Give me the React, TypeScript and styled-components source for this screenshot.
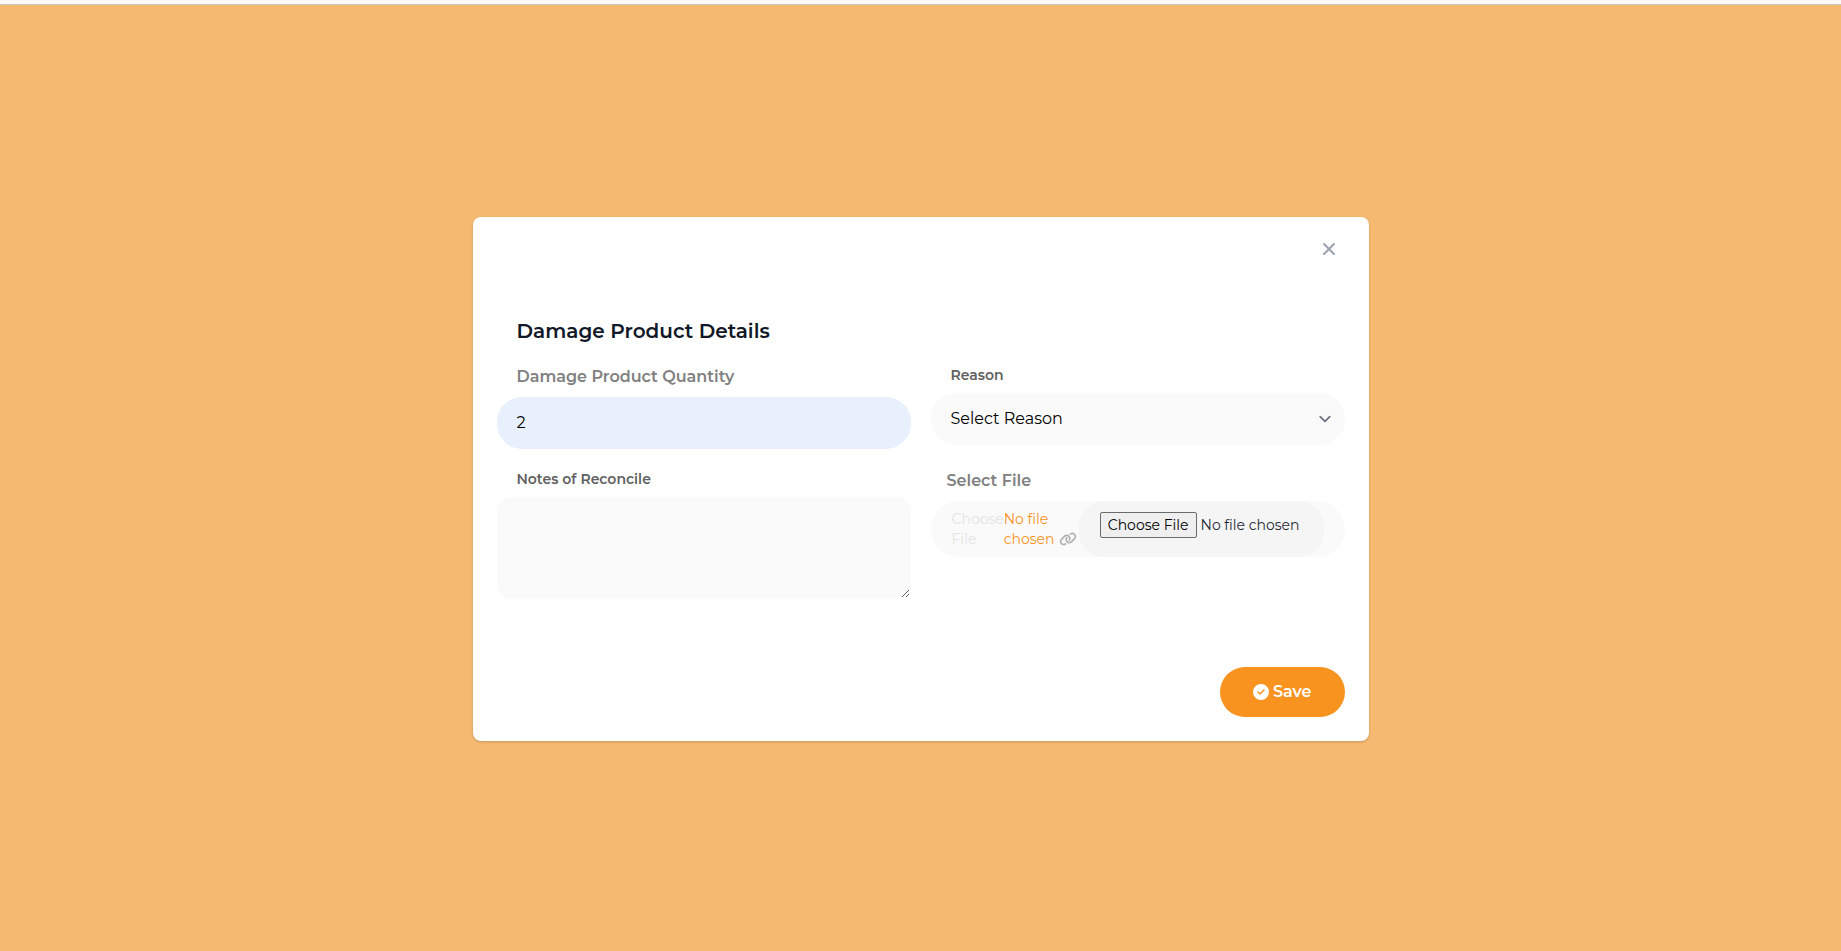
import React from "react";
import styled, { createGlobalStyle } from "styled-components";
import { FaCircleCheck, FaLink } from "react-icons/fa6";

const GlobalStyle = createGlobalStyle`
  *, *::before, *::after { box-sizing: border-box; }
  body {
    margin: 0;
    font-family: Montserrat, Inter, "Liberation Sans", sans-serif;
    font-size: 16px;
    line-height: 24px;
    color: #111827;
  }
  button, input, select, textarea { font: inherit; color: inherit; margin: 0; }
`;

const Page = styled.div`
  display: flex;
  flex-direction: column;
  min-height: 100vh;
`;

const TopBar = styled.header`
  height: 5px;
  background: #fafafa;
  border-bottom: 1px solid #c8c8c8;
`;

const Backdrop = styled.main`
  flex: 1;
  display: flex;
  align-items: center;
  justify-content: center;
  padding-top: 2px;
  background: #f5b971;
`;

const Dialog = styled.section`
  width: 100%;
  max-width: 896px;
  padding: 16px 24px 24px;
  border-radius: 8px;
  background: #fff;
  box-shadow: 0 1px 3px rgba(0, 0, 0, 0.1), 0 1px 2px rgba(0, 0, 0, 0.1);
`;

const DialogHeader = styled.div`
  display: flex;
  justify-content: flex-end;
  margin-bottom: 52px;
`;

const CloseButton = styled.button`
  display: flex;
  padding: 6px;
  border: 0;
  border-radius: 8px;
  background: transparent;
  color: #9ca3af;
  cursor: pointer;
`;

const Title = styled.h1`
  margin: 0 20px 20px;
  font-size: 20px;
  line-height: 28px;
  font-weight: 600;
`;

const Fields = styled.div`
  display: grid;
  grid-template-columns: repeat(2, minmax(0, 1fr));
  gap: 20px;
  align-items: start;
`;

const Field = styled.div`
  display: flex;
  flex-direction: column;
  gap: 8px;
`;

const Label = styled.label<{ $large?: boolean; $inset?: number }>`
  padding-left: ${(p) => p.$inset ?? 20}px;
  font-size: ${(p) => (p.$large ? 16 : 14)}px;
  line-height: ${(p) => (p.$large ? 24 : 20)}px;
  font-weight: 600;
  color: ${(p) => (p.$large ? "#808080" : "#5f5f5f")};
`;

const QuantityInput = styled.input`
  width: 100%;
  height: 52px;
  padding: 0 20px 2px;
  border: 0;
  border-radius: 25px;
  background: #e8f0fe;
  color: #000;
`;

const SelectWrap = styled.div`
  position: relative;
`;

const ReasonSelect = styled.select`
  display: block;
  appearance: none;
  width: 100%;
  height: 52px;
  padding: 0 40px 0 20px;
  border: 0;
  border-radius: 25px;
  background: #fafafa;
  color: #000;
`;

const Chevron = styled.svg`
  position: absolute;
  top: 14px;
  right: 8px;
  width: 24px;
  height: 24px;
  color: #6b7280;
  pointer-events: none;
`;

const Notes = styled.textarea`
  width: 100%;
  height: 102px;
  padding: 12px 20px;
  border: 1px solid #fafafa;
  border-radius: 15px;
  background: #fafafa;
  resize: vertical;
`;

const FileField = styled.div`
  display: flex;
  height: 56px;
  padding: 0 21px;
  border-radius: 28px;
  background: #fafafa;
  font-size: 14px;
  line-height: 20px;
`;

const FilePrompt = styled.span`
  flex: 0 0 52px;
  padding-top: 8px;
  color: #e3e3e3;
`;

const FileStatus = styled.span`
  flex: 0 0 75px;
  padding-top: 8px;
  color: #f7931e;

  svg {
    width: 18px;
    height: 14px;
    margin-left: 4px;
    vertical-align: -2px;
    color: #b3b3b3;
  }
`;

const FileInput = styled.input`
  flex: 1;
  min-width: 0;
  height: 56px;
  padding: 11px 21px;
  border-radius: 25px;
  background: #f5f5f5;
  color: #1f2937;

  &::file-selector-button {
    height: 26px;
    margin: 0 4px 0 0;
    padding: 1px 7px;
    border: 1px solid #6b6b6b;
    border-radius: 2px;
    background: #efefef;
    color: #000;
    font: inherit;
  }
`;

const Actions = styled.div`
  display: flex;
  justify-content: flex-end;
  margin-top: 68px;
`;

const SaveButton = styled.button`
  display: flex;
  align-items: center;
  gap: 4px;
  height: 50px;
  padding: 0 33px;
  border: 0;
  border-radius: 25px;
  background: #f7931e;
  color: #fff;
  font-weight: 600;
  cursor: pointer;
`;

export default function App() {
  return (
    <Page>
      <GlobalStyle />
      <TopBar />
      <Backdrop>
        <Dialog role="dialog" aria-labelledby="dialog-title">
          <DialogHeader>
            <CloseButton type="button" aria-label="Close">
              <svg width="20" height="20" viewBox="0 0 20 20" fill="currentColor">
                <path
                  fillRule="evenodd"
                  clipRule="evenodd"
                  d="M4.293 4.293a1 1 0 011.414 0L10 8.586l4.293-4.293a1 1 0 111.414 1.414L11.414 10l4.293 4.293a1 1 0 01-1.414 1.414L10 11.414l-4.293 4.293a1 1 0 01-1.414-1.414L8.586 10 4.293 5.707a1 1 0 010-1.414z"
                />
              </svg>
            </CloseButton>
          </DialogHeader>
          <form onSubmit={(e) => e.preventDefault()}>
            <Title id="dialog-title">Damage Product Details</Title>
            <Fields>
              <Field>
                <Label $large htmlFor="quantity">Damage Product Quantity</Label>
                <QuantityInput id="quantity" type="text" inputMode="numeric" defaultValue="2" />
              </Field>
              <Field>
                <Label htmlFor="reason">Reason</Label>
                <SelectWrap>
                  <ReasonSelect id="reason" defaultValue="">
                    <option value="">Select Reason</option>
                  </ReasonSelect>
                  <Chevron viewBox="0 0 20 20" fill="none" aria-hidden="true">
                    <path d="M6 8l4 4 4-4" stroke="currentColor" strokeWidth="1.5" strokeLinecap="round" strokeLinejoin="round" />
                  </Chevron>
                </SelectWrap>
              </Field>
              <Field>
                <Label htmlFor="notes">Notes of Reconcile</Label>
                <Notes id="notes" />
              </Field>
              <Field>
                <Label $large $inset={16} htmlFor="file">Select File</Label>
                <FileField>
                  <FilePrompt>Choose File</FilePrompt>
                  <FileStatus>
                    No file chosen
                    <FaLink aria-hidden="true" />
                  </FileStatus>
                  <FileInput id="file" type="file" />
                </FileField>
              </Field>
            </Fields>
            <Actions>
              <SaveButton type="submit">
                <FaCircleCheck size={16} aria-hidden="true" />
                Save
              </SaveButton>
            </Actions>
          </form>
        </Dialog>
      </Backdrop>
    </Page>
  );
}
